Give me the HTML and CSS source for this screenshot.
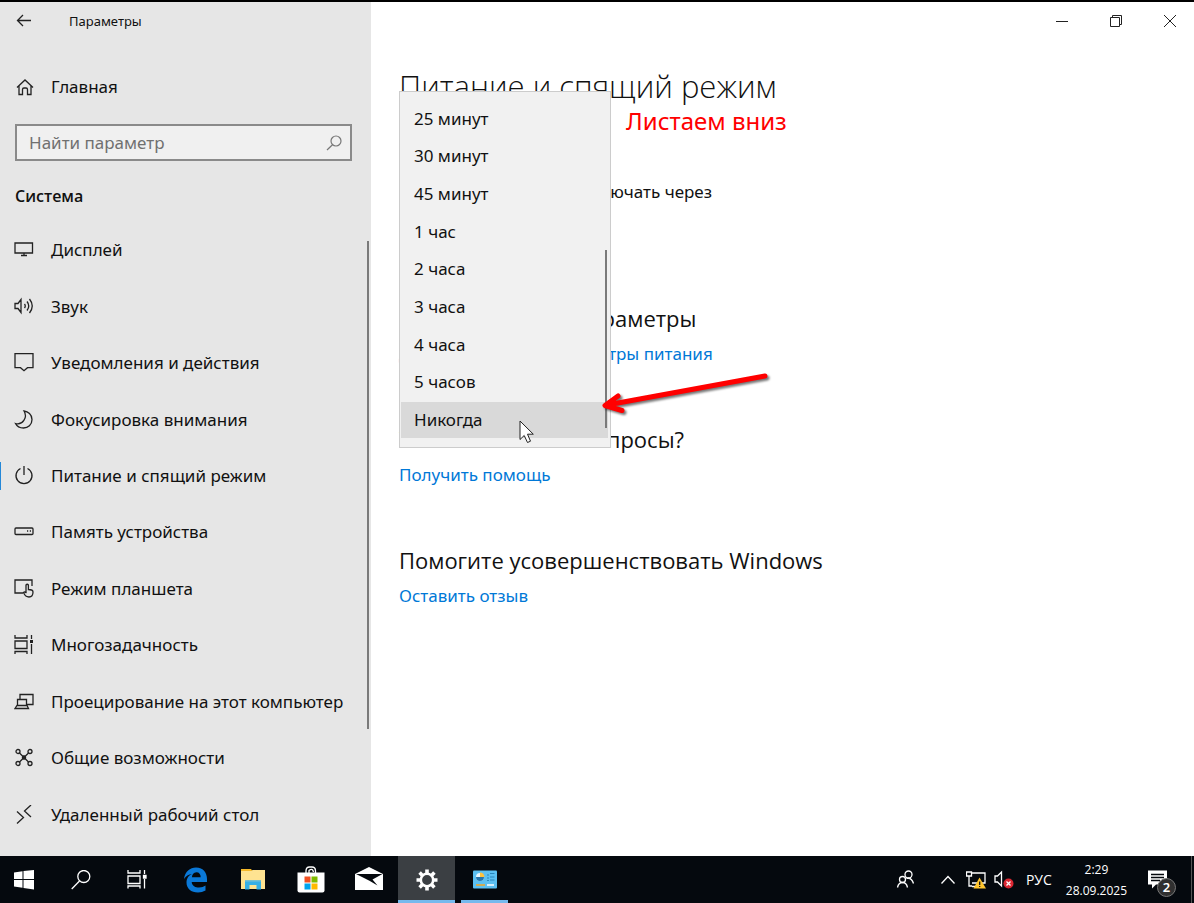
FILE: index.html
```
<!DOCTYPE html>
<html lang="ru">
<head>
<meta charset="utf-8">
<title>Параметры</title>
<link rel="stylesheet" href="styles.css">
</head>
<body>
<div class="window">
  <aside class="sidebar">
    <header class="titlebar">
      <button class="back" aria-label="Назад"><svg class="icon" viewBox="0 0 20 20"><path d="M17 9.500H3.500M9 4L3.500 9.500L9 15"/></svg></button>
      <span class="app-title">Параметры</span>
    </header>
    <a class="nav-link home" href="#"><svg class="icon" viewBox="0 0 20 20"><path d="M3 10.500L11 3l8 7.500M5 9v8.500h3.500v-5q0-1.500 1.500-1.500h2q1.500 0 1.500 1.500v5H17V9"/></svg>Главная</a>
    <div class="search">
      <input class="search-input" type="text" placeholder="Найти параметр" aria-label="Найти параметр">
      <svg class="search-icon" viewBox="0 0 16 16"><circle cx="10" cy="6" r="5"/><path d="M6.500 9.700L1 15"/></svg>
    </div>
    <h2 class="group">Система</h2>
    <nav class="nav">
      <a class="nav-link" href="#"><svg class="icon" viewBox="0 0 20 20"><path d="M1 3h17.500v10H1zM10 13v2M7 15.500h6"/></svg>Дисплей</a>
      <a class="nav-link" href="#"><svg class="icon" viewBox="0 0 20 20"><path d="M1 6.500h3l3-4v13l-3-4H1zM10.500 7q1.500 2 0 4M13 4.500q3.500 4.500 0 9M15.500 2q5.500 7 0 14"/></svg>Звук</a>
      <a class="nav-link" href="#"><svg class="icon" viewBox="0 0 20 20"><path d="M1 .7h18v14h-5.500l-3.500 3-3.500-3H1z"/></svg>Уведомления и действия</a>
      <a class="nav-link" href="#"><svg class="icon" viewBox="0 0 20 20"><path d="M10 1c4 .5 8 3.500 8 8.500 0 5.500-4 8.500-8.500 8.500-3.500 0-6.500-1.500-8-4.500 7 2 12.500-6 8.500-12.500z"/></svg>Фокусировка внимания</a>
      <a class="nav-link current" href="#" aria-current="page"><svg class="icon" viewBox="0 0 20 20"><path d="M10 0v9M6.500 2.500a8 8 0 1 0 7 0"/></svg>Питание и спящий режим</a>
      <a class="nav-link" href="#"><svg class="icon" viewBox="0 0 20 20"><rect x="1" y="6" width="18" height="6.500" rx="1"/><path d="M13 9h1.200M15.800 9H17"/></svg>Память устройства</a>
      <a class="nav-link" href="#"><svg class="icon" viewBox="0 0 20 20"><path d="M9 14H1V1h17v6M12 13V6q1.200-1.500 2.400 0v4.500q4.600 0 4.600 2.500c0 3-.5 5-4 5-3 0-4-1-5.500-4.500 1-1 2-.5 3 .5"/></svg>Режим планшета</a>
      <a class="nav-link" href="#"><svg class="icon" viewBox="0 0 20 20"><path d="M1 0v3h12V0M1 6h12v7.500H1zM1 19v-2.500h12V19M17.500 0v4M17.500 9v10"/><path class="solid" d="M16 5h3v3h-3z"/></svg>Многозадачность</a>
      <a class="nav-link" href="#"><svg class="icon" viewBox="0 0 20 20"><path d="M6 7V2.500h13v10h-6M3.500 7.500h9v6h-9zM1 16.500l2-3h10l1.500 3z"/></svg>Проецирование на этот компьютер</a>
      <a class="nav-link" href="#"><svg class="icon" viewBox="0 0 20 20"><circle cx="4" cy="3.500" r="2"/><circle cx="16" cy="3.500" r="2"/><circle cx="4" cy="15.500" r="2"/><circle cx="16" cy="15.500" r="2"/><path d="M5.500 5l9 9M14.500 5l-9 9M8.500 8h3v3h-3z"/></svg>Общие возможности</a>
      <a class="nav-link" href="#"><svg class="icon" viewBox="0 0 20 20"><path d="M3 6.500l6.500 6L3 18.500M17 0L10.500 6 17 12"/></svg>Удаленный рабочий стол</a>
    </nav>
    <div class="side-scroll"></div>
  </aside>
  <main class="main">
    <div class="caption">
      <button class="cap" aria-label="Свернуть"><svg class="cap-icon" viewBox="0 0 12 12"><path d="M0 6.500h12"/></svg></button>
      <button class="cap" aria-label="Восстановить"><svg class="cap-icon" viewBox="0 0 12 12"><path d="M.5 2.500h9v9h-9zM2.500 2.500V.5h9V9.500h-2"/></svg></button>
      <button class="cap" aria-label="Закрыть"><svg class="cap-icon" viewBox="0 0 12 12"><path d="M0 0l12 12M12 0L0 12"/></svg></button>
    </div>
    <div class="content">
      <h1 class="page-title">Питание и спящий режим</h1>
      <p class="label">При питании от сети отключать через</p>
      <section class="block">
        <h2 class="block-title">Сопутствующие параметры</h2>
        <a class="link" href="#">Дополнительные параметры питания</a>
      </section>
      <section class="block">
        <h2 class="block-title">У вас появились вопросы?</h2>
        <a class="link" href="#">Получить помощь</a>
      </section>
      <section class="block">
        <h2 class="block-title">Помогите усовершенствовать Windows</h2>
        <a class="link" href="#">Оставить отзыв</a>
      </section>
      <div class="popup" role="listbox" aria-label="Отключать через">
        <button class="option" role="option">25 минут</button>
        <button class="option" role="option">30 минут</button>
        <button class="option" role="option">45 минут</button>
        <button class="option" role="option">1 час</button>
        <button class="option" role="option">2 часа</button>
        <button class="option" role="option">3 часа</button>
        <button class="option" role="option">4 часа</button>
        <button class="option" role="option">5 часов</button>
        <button class="option selected" role="option" aria-selected="true">Никогда</button>
        <div class="popup-scroll"></div>
      </div>
      <span class="note">Листаем вниз</span>
      <svg class="arrow" viewBox="0 0 180 52"><path d="M170 11L12 40M23 31L10 40.500l17 5"/></svg>
      <svg class="cursor" viewBox="0 0 16 24"><path d="M1 1v18.500l4.200-4L8.500 22.500l3-1.300-3-7h5.800z"/></svg>
    </div>
  </main>
</div>
<footer class="taskbar">
  <button class="task start" aria-label="Пуск"><svg class="t20" viewBox="0 0 20 20"><path fill="#fff" d="M0 2.500l8.500-1.200V9H0zM9.500 1.100L20 0v9H9.500zM0 10h8.500v7.700L0 16.500zM9.500 10H20v9.500L9.500 17.900z"/></svg></button>
  <button class="task find" aria-label="Поиск"><svg class="t20 line" viewBox="0 0 20 20"><circle cx="12.800" cy="6.500" r="6"/><path d="M8.500 11L.7 19"/></svg></button>
  <button class="task views" aria-label="Представление задач"><svg class="t20 line" viewBox="0 0 20 20"><path d="M1 0v3h12V0M1 6h12v7.500H1zM1 18.500v-2.500h12v2.500M17.500 0v4M17.500 9v9.500"/><path fill="#fff" d="M16.500 5.500h2.500v2.500h-2.500z"/></svg></button>
  <button class="task" aria-label="Edge"><svg class="t26" viewBox="0 0 26 26"><path fill="#0a78d7" d="M2 12C3 4.500 8 .5 14 .5c7.500 0 11 5.500 11 11.500v3H9.700c.3 4 3.800 5.600 7.300 5.600 3 0 4.500-.8 6.500-2v5c-2.500 1.300-4.500 1.900-7.500 1.900-7 0-11.500-4-11.500-10 0-4.300 2.500-7.300 5.500-8.500C6.500 7.500 4 9 2 12zM9.900 10.300h8.800c0-3-1.500-5-4.300-5s-4.200 2.200-4.500 5z"/></svg></button>
  <button class="task" aria-label="Проводник"><svg class="t26" viewBox="0 0 26 26"><path fill="#f5b829" d="M1 2h10l1.500 2H1z"/><path fill="#ffe391" d="M1 4h10.500l1-1H25v19H1z"/><path fill="#36b0e6" d="M5 22.500v-9h16v9h-4.500v-4.500h-7v4.500z"/><path fill="#58b8df" d="M5 13.500h16V15H5z"/></svg></button>
  <button class="task" aria-label="Магазин"><svg class="t28" viewBox="0 0 28 28"><path d="M9 8V5q0-4 3.500-4H15q3.500 0 3.500 4v3M12 8V4.500q3.500-3 4.500 1.500" fill="none" stroke="#fff" stroke-width="1.300"/><path fill="#fff" d="M.5 6.500h27v18q0 2-2 2h-23q-2 0-2-2z"/><path fill="#f25022" d="M7.500 10.500h6v6h-6z"/><path fill="#7fba00" d="M14.500 10.500h6v6h-6z"/><path fill="#00a4ef" d="M7.500 17.500h6v6h-6z"/><path fill="#ffb900" d="M14.500 17.500h6v6h-6z"/></svg></button>
  <button class="task" aria-label="Почта"><svg class="t28" viewBox="0 0 28 28"><path fill="#fff" d="M0 8L14 1l14 7v16H0z"/><path fill="#05090e" d="M1 8h26.500L17.500 13.500l5 6L14 14.500z"/></svg></button>
  <button class="task open active" aria-label="Параметры"><svg class="t22" viewBox="0 0 22 22"><circle cx="11" cy="11" r="6.200" fill="none" stroke="#fff" stroke-width="2.600"/><path fill="none" stroke="#fff" stroke-width="3.600" d="M11 .5v4M11 17.500v4M.5 11h4M17.500 11h4M3.600 3.600l2.800 2.800M15.600 15.600l2.800 2.800M18.400 3.600l-2.800 2.800M6.400 15.600l-2.800 2.800"/></svg></button>
  <button class="task open" aria-label="Панель управления"><svg class="t26" viewBox="0 0 26 26"><rect x="1" y="3.500" width="24" height="18" rx="1" fill="#5cc0f2"/><circle cx="8" cy="10" r="4" fill="#e8f6fd"/><path fill="#2476ae" d="M8 10V6a4 4 0 1 1-4 4z"/><path fill="#ffc23d" d="M8 10V5.500a4.500 4.500 0 0 1 4.500 4.500z"/><path stroke="#2a86bb" stroke-width="1.200" d="M15 8h2M18 6.500h4.500M15 11h2M18 10h4.500M15 13.500h2M18 13h4.500"/><path stroke="#f5a623" stroke-width="1.500" d="M4 18h9"/><path stroke="#fff" stroke-width="1.500" d="M15 18h7"/></svg></button>
  <div class="tray">
    <button class="tray-button" aria-label="Люди"><svg class="t20 line" viewBox="0 0 20 20"><circle cx="12.500" cy="4.500" r="3.500"/><path d="M10.500 8.500q5-1.500 7 5"/><circle cx="6.500" cy="9.500" r="3"/><path d="M1.500 17.500q1-5 5-5t5 5"/></svg></button>
    <button class="tray-button caret" aria-label="Показать скрытые значки"><svg class="t16 line" viewBox="0 0 16 16"><path d="M1.500 11.500L8 4.500l6.500 7"/></svg></button>
    <button class="tray-button" aria-label="Сеть"><svg class="t20 line" viewBox="0 0 20 20"><path d="M5 3h14v10H6M.5 2h5v4h-5zM3 6v10h3M6 16.500h5"/><path fill="#ffc52e" stroke="none" d="M13.500 7.500L20 18.500H7.500z"/><path stroke="#111" d="M13.700 11.500v3.500M13.700 16v1"/></svg></button>
    <button class="tray-button" aria-label="Звук выключен"><svg class="t20 line" viewBox="0 0 20 20"><path d="M1 6h2.500l4-4v14l-4-4H1z"/><circle cx="14.500" cy="13.500" r="5" fill="#dc2732" stroke="none"/><path d="M12.500 11.500l4 4M16.500 11.500l-4 4"/></svg></button>
    <button class="tray-button lang">РУС</button>
    <button class="tray-button clock"><span>2:29</span><span>28.09.2025</span></button>
    <button class="tray-button center" aria-label="Уведомления"><svg class="t20" viewBox="0 0 20 20"><path fill="#fff" d="M0 .5h19v14H8l-4 4v-4H0z"/><path stroke="#05090e" stroke-width="1.300" d="M3 4.500h13M3 7.500h13M3 10.500h9"/></svg><span class="badge">2</span></button>
  </div>
  <div class="show-desktop"></div>
</footer>
</body>
</html>
```
FILE: styles.css
```
* { box-sizing: border-box; }
body {
  margin: 0;
  min-height: 100vh;
  display: flex;
  flex-direction: column;
  border-top: 2px solid #000;
  background: #fff;
  color: #111;
  font: 17px/24px "Noto Sans", "Open Sans", sans-serif;
}
h1, h2, p { margin: 0; }
a { text-decoration: none; }
button {
  margin: 0;
  padding: 0;
  border: 0;
  background: none;
  color: inherit;
  font: inherit;
}
svg { display: block; flex: none; }
.window {
  flex: 1;
  display: grid;
  grid-template-columns: 371px 1fr;
}

/* Sidebar */
.sidebar {
  position: relative;
  display: flex;
  flex-direction: column;
  padding-bottom: 13px;
  background: #e6e6e6;
}
.titlebar {
  display: flex;
  align-items: center;
  gap: 35px;
  height: 38px;
  padding-left: 14px;
}
.app-title { font-size: 13px; }
.icon {
  width: 20px;
  height: 20px;
  fill: none;
  stroke: #222;
  stroke-width: 1.3;
}
.solid { fill: #222; stroke: none; }
.nav-link {
  display: flex;
  align-items: center;
  gap: 17px;
  padding-left: 14px;
  color: #111;
}
.home { height: 40px; margin-top: 27px; }
.search {
  display: flex;
  align-items: center;
  height: 37px;
  margin: 17px 19px 0 15px;
  padding-right: 8px;
  border: 2px solid #8a8a8a;
  background: #f0f0f0;
}
.search-input {
  flex: 1;
  min-width: 0;
  padding: 0 12px;
  border: 0;
  outline: 0;
  background: none;
  font: inherit;
}
.search-input::placeholder { color: #707070; opacity: 1; }
.search-icon {
  width: 16px;
  height: 16px;
  fill: none;
  stroke: #777;
  stroke-width: 1.2;
}
.group {
  margin: 23px 0 14px 15px;
  font: 600 16px/24px "Open Sans", "Noto Sans", sans-serif;
}
.nav { flex: 1; display: flex; flex-direction: column; }
.nav .nav-link { flex: 1; position: relative; }
.current::before {
  content: "";
  position: absolute;
  left: 0;
  width: 1px;
  height: 28px;
  background: #2488d8;
}
.side-scroll {
  position: absolute;
  top: 239px;
  right: 2px;
  bottom: 127px;
  width: 2px;
  background: #7a7a7a;
}

/* Main pane */
.caption { display: flex; justify-content: flex-end; }
.cap {
  display: grid;
  place-items: center;
  width: 54px;
  height: 38px;
}
.cap:last-child { width: 48px; margin-left: 3px; }
.cap-icon {
  width: 12px;
  height: 12px;
  fill: none;
  stroke: #222;
}
.content { position: relative; padding: 26px 28px 40px; }
.page-title {
  font: 300 31px/40px "Open Sans", "Noto Sans", sans-serif;
}
.label { margin: 74px 0 99px; }
.block { margin-bottom: 58px; }
.block-title {
  margin-bottom: 9px;
  font: 400 22px/30px "Open Sans", "Noto Sans", sans-serif;
}
.link { display: block; color: #0078d7; }
.popup {
  position: absolute;
  top: 51px;
  left: 28px;
  width: 212px;
  height: 357px;
  display: grid;
  grid-auto-rows: 1fr;
  gap: 2px;
  padding: 9px 2px 9px 1px;
  border: 1px solid #ccc;
  background: #f1f1f1;
}
.option { padding-left: 13px; text-align: left; }
.selected { background: #d9d9d9; }
.popup-scroll {
  position: absolute;
  top: 158px;
  right: 3px;
  bottom: 19px;
  width: 2px;
  background: #7a7a7a;
}
.note {
  position: absolute;
  top: 65px;
  left: 255px;
  color: #f00;
  font-size: 24px;
  line-height: 32px;
}
.arrow {
  position: absolute;
  top: 325px;
  left: 224px;
  width: 180px;
  height: 52px;
  fill: none;
  stroke: #f00;
  stroke-width: 5;
  stroke-linecap: round;
  stroke-linejoin: round;
  filter: drop-shadow(2px 2px 1px #0008);
}
.cursor {
  position: absolute;
  top: 380px;
  left: 148px;
  width: 16px;
  height: 24px;
  fill: #fff;
  stroke: #222;
}

/* Taskbar */
.taskbar {
  display: flex;
  height: 47px;
  background: #05090e;
  color: #fff;
}
.task { display: grid; place-items: center; width: 57px; margin-right: 1px; }
.start { width: 48px; margin: 0; }
.find { width: 66px; margin: 0; }
.views { width: 46px; margin-right: 6px; }
.open { position: relative; }
.open::after {
  content: "";
  position: absolute;
  right: 5px;
  bottom: 0;
  left: 5px;
  height: 3px;
  background: #76b9ed;
}
.active { background: #3b3f43; }
.active::after { right: 0; left: 0; }
.t16 { width: 16px; height: 16px; }
.t20 { width: 20px; height: 20px; }
.t22 { width: 22px; height: 22px; }
.t26 { width: 26px; height: 26px; }
.t28 { width: 28px; height: 28px; }
.line { fill: none; stroke: #fff; stroke-width: 1.3; }
.tray {
  display: flex;
  align-items: center;
  gap: 8px;
  margin-left: auto;
  padding-right: 23px;
}
.caret { margin: 0 2px 0 16px; }
.lang { margin-left: 4px; font-family: "Open Sans", sans-serif; font-size: 14px; }
.clock {
  display: flex;
  flex-direction: column;
  align-items: center;
  margin: 0 13px 0 6px;
  font-family: "Open Sans", sans-serif;
  font-size: 12px;
  line-height: 21px;
}
.center { position: relative; }
.badge {
  position: absolute;
  top: 8px;
  left: 9px;
  width: 19px;
  height: 19px;
  border: 1px solid #777;
  border-radius: 50%;
  background: #303030;
  font-size: 13px;
  line-height: 17px;
  font-weight: 600;
}
.show-desktop { width: 3px; border-left: 1px solid #555; }
```
